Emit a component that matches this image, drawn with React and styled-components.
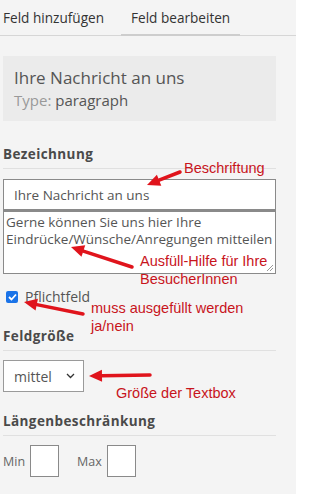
import React from "react"
import styled, { createGlobalStyle } from "styled-components"

const Global = createGlobalStyle`
  html, body {
    margin: 0;
    padding: 0;
    background: #fff;
    font-family: "Open Sans", "Noto Sans", sans-serif;
  }
`;

const Page = styled('div')`
  position: relative;
  width: 309px;
  height: 494px;
  overflow: hidden;
  background: #fff;
`;

const Panel = styled('div')`
  width: 296px;
  height: 494px;
  background: #f4f4f4;
  display: flex;
  flex-direction: column;
`;

const Tabs = styled('div')`
  display: flex;
  align-items: flex-end;
  height: 35px;
  border-bottom: 1px solid #d6d6d6;
  padding-left: 3px;
  column-gap: 7px;
`;

const Tab = styled('div')`
  font-size: 13.6px;
  color: #333;
  height: 35px;
  box-sizing: border-box;
  padding: 7px 10px 0;
  margin-left: ${p => p.$first ? '-10px' : '0'};
  border-bottom: 2px solid ${p => p.$active ? '#cdcdcd' : 'transparent'};
  margin-bottom: -1px;
`;

const Body = styled('div')`
  display: flex;
  flex-direction: column;
  padding: 20px 20px 0 3px;
`;

const InfoBox = styled('div')`
  background: #ebebeb;
  padding: 10px 11px 11px;
  display: flex;
  flex-direction: column;
  row-gap: 1px;
`;

const InfoTitle = styled('div')`
  font-size: 17px;
  color: #555;
`;

const InfoType = styled('div')`
  font-size: 15px;
  color: #999;

  span {
    color: #555;
  }
`;

const Section = styled('div')`
  font-size: 13.5px;
  font-weight: 700;
  color: #4a4a4a;
  letter-spacing: 0.4px;
  margin-top: ${p => p.$top || 24}px;
  padding-bottom: 5px;
  border-bottom: 1px solid #e0e0e0;
`;

const TextInput = styled('div')`
  margin-top: 10px;
  height: 31px;
  box-sizing: border-box;
  background: #fff;
  border: 1px solid #8a8a8a;
  font-size: 13.5px;
  color: #555;
  padding: 6px 10px 0;
`;

const TextArea = styled('div')`
  position: relative;
  height: 64px;
  box-sizing: border-box;
  background: #fff;
  border: 1px solid #8a8a8a;
  border-top-width: 2px;
  font-size: 13.5px;
  line-height: 17px;
  color: #555;
  padding: 2px 2px;
`;

const Grip = styled('svg')`
  position: absolute;
  right: 1px;
  bottom: 1px;
`;

const CheckRow = styled('label')`
  display: flex;
  align-items: center;
  column-gap: 7px;
  margin-top: 13px;
  padding-left: 3px;
  font-size: 14px;
  color: #555;
`;

const Check = styled('span')`
  width: 12px;
  height: 12px;
  border-radius: 2px;
  background: #1a73e8;
  display: flex;
  align-items: center;
  justify-content: center;
`;

const Select = styled('div')`
  margin-top: 9px;
  width: 81px;
  height: 32px;
  box-sizing: border-box;
  background: #fff;
  border: 1px solid #9a9a9a;
  display: flex;
  align-items: center;
  justify-content: space-between;
  padding: 0 8px 0 10px;
  font-size: 14px;
  color: #555;
`;

const MinMaxRow = styled('div')`
  display: flex;
  align-items: center;
  margin-top: 9px;
  font-size: 12.5px;
  color: #666;
`;

const SmallLabel = styled('span')`
  margin-right: 5px;
  margin-left: ${p => p.$gap || 0}px;
`;

const SmallBox = styled('div')`
  width: 29px;
  height: 32px;
  box-sizing: border-box;
  background: #fff;
  border: 1px solid #8a8a8a;
`;

const Note = styled('div')`
  position: absolute;
  left: ${p => p.$x}px;
  top: ${p => p.$y}px;
  font-family: "Liberation Sans", Arial, sans-serif;
  font-size: 14.5px;
  line-height: 17px;
  color: #c8141c;
  white-space: nowrap;
`;

const Arrows = styled('svg')`
  position: absolute;
  left: 0;
  top: 0;
  pointer-events: none;
`;

function Arrow({ x1, y1, x2, y2 }) {
  const dx = x2 - x1, dy = y2 - y1
  const len = Math.hypot(dx, dy)
  const ux = dx / len, uy = dy / len
  const head = 13, half = 6
  const bx = x2 - ux * head, by = y2 - uy * head
  const px = -uy * half, py = ux * half
  return (
    <g fill="#e0141c" stroke="#e0141c">
      <line x1={x1} y1={y1} x2={bx} y2={by} strokeWidth="3.5" strokeLinecap="round" />
      <polygon points={`${x2},${y2} ${bx + px},${by + py} ${bx - px},${by - py}`} stroke="none" />
    </g>
  )
}

function App() {
  return (
    <Page>
      <Global />
      <Panel>
        <Tabs>
          <Tab $first>Feld hinzufügen</Tab>
          <Tab $active>Feld bearbeiten</Tab>
        </Tabs>
        <Body>
          <InfoBox>
            <InfoTitle>Ihre Nachricht an uns</InfoTitle>
            <InfoType>Type: <span>paragraph</span></InfoType>
          </InfoBox>

          <Section $top={24}>Bezeichnung</Section>
          <TextInput>Ihre Nachricht an uns</TextInput>
          <TextArea>
            Gerne können Sie uns hier Ihre Eindrücke/Wünsche/Anregungen mitteilen
            <Grip width="8" height="8" viewBox="0 0 8 8">
              <path d="M7 1 L1 7 M7 4 L4 7" stroke="#999" strokeWidth="1" />
            </Grip>
          </TextArea>

          <CheckRow>
            <Check>
              <svg width="9" height="8" viewBox="0 0 9 8">
                <path d="M1 4 L3.5 6.5 L8 1.5" fill="none" stroke="#fff" strokeWidth="1.8" />
              </svg>
            </Check>
            Pflichtfeld
          </CheckRow>

          <Section $top={21}>Feldgröße</Section>
          <Select>
            mittel
            <svg width="9" height="6" viewBox="0 0 9 6">
              <path d="M1 1 L4.5 4.5 L8 1" fill="none" stroke="#333" strokeWidth="1.3" />
            </svg>
          </Select>

          <Section $top={20}>Längenbeschränkung</Section>
          <MinMaxRow>
            <SmallLabel>Min</SmallLabel>
            <SmallBox />
            <SmallLabel $gap={18}>Max</SmallLabel>
            <SmallBox />
          </MinMaxRow>
        </Body>
      </Panel>

      <Note $x={184} $y={160}>Beschriftung</Note>
      <Note $x={140} $y={253}>Ausfüll-Hilfe für Ihre</Note>
      <Note $x={140} $y={271}>BesucherInnen</Note>
      <Note $x={91} $y={300}>muss ausgefüllt werden</Note>
      <Note $x={91} $y={318}>ja/nein</Note>
      <Note $x={116} $y={385}>Größe der Textbox</Note>

      <Arrows width="309" height="494" viewBox="0 0 309 494">
        <Arrow x1={180} y1={172} x2={147} y2={185} />
        <Arrow x1={132} y1={267} x2={71} y2={247} />
        <Arrow x1={83} y1={314} x2={24} y2={302} />
        <Arrow x1={150} y1={375} x2={89} y2={376} />
      </Arrows>
    </Page>
  )
}

export default App
